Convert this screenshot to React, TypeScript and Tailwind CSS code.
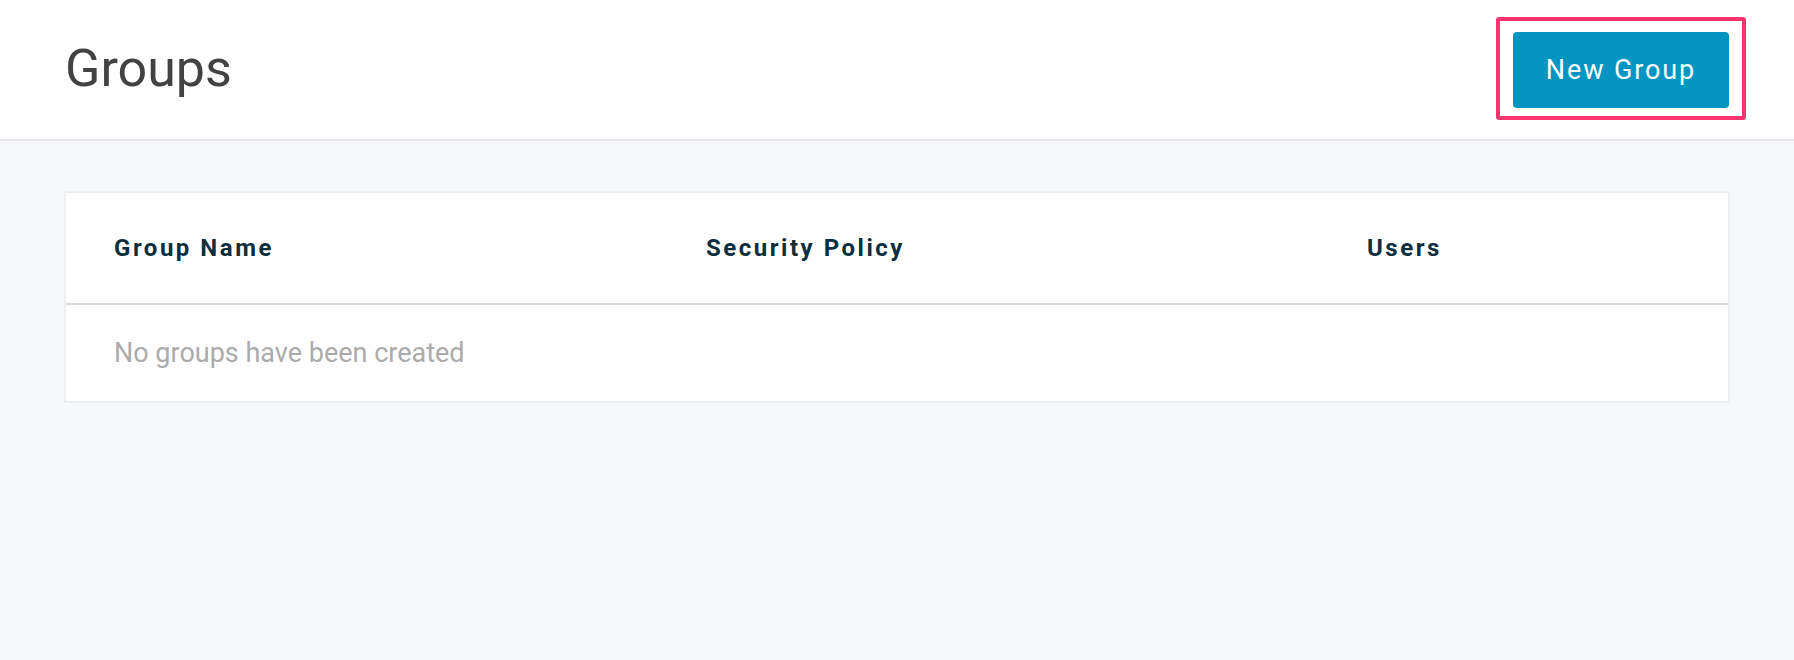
import React from 'react';

const GroupsPage = () => {
  return (
    <div className="min-h-[660px] bg-[#f7f8fa] font-['Roboto',sans-serif]">
      {/* Page header */}
      <header className="h-[141px] bg-white border-b-2 border-[#e8eaed] flex items-center justify-between pl-[65px] pr-[48px]">
        <h1 className="text-[52px] leading-none text-[#424242] -mt-[2px]">Groups</h1>
        <div className="border-[4px] border-[#ff3370] rounded-[3px] px-[13px] pt-[11px] pb-[8px] -mt-[2px]">
          <button className="w-[216px] h-[76px] rounded-[4px] bg-[#0295c2] text-white text-[27px] tracking-[0.07em]">
            New Group
          </button>
        </div>
      </header>

      {/* Groups table */}
      <div className="px-[64px] pt-[50px]">
        <div className="bg-white border-2 border-[#eeeff1]">
          <div className="grid grid-cols-[592px_661px_1fr] h-[112px] items-center pl-[48px] border-b-2 border-[#d9d9d9] text-[24px] font-bold tracking-[0.105em] text-[#0c2e3e]">
            <span>Group Name</span>
            <span>Security Policy</span>
            <span>Users</span>
          </div>
          <div className="h-[96px] flex items-center pl-[48px] text-[27px] text-[#ababab]">
            No groups have been created
          </div>
        </div>
      </div>
    </div>
  );
};

export default GroupsPage;
